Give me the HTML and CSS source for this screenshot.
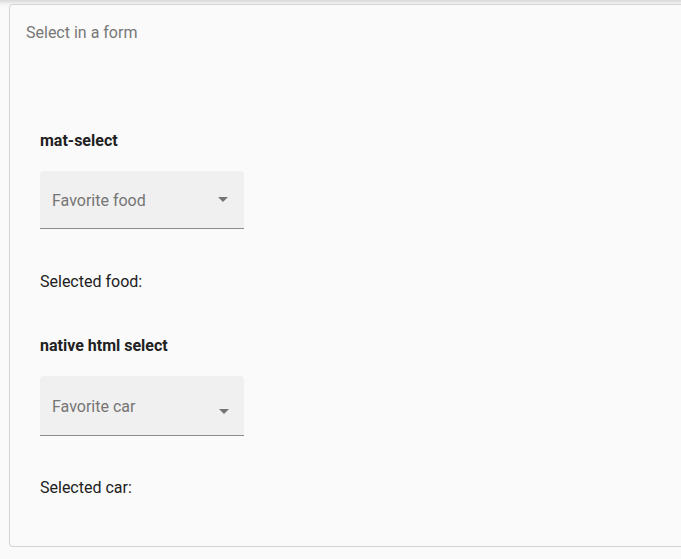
FILE: index.html
```html
<!DOCTYPE html>
<html>
<head>
<meta charset="utf-8">
<link rel="stylesheet" href="styles.css">
</head>
<body>
<div class="card">
  <div class="card-title">Select in a form</div>
  <form class="content">
    <h4 class="heading">mat-select</h4>
    <div class="field">
      <span class="placeholder">Favorite food</span>
      <span class="arrow"></span>
    </div>
    <p class="selected">Selected food:</p>
    <h4 class="heading">native html select</h4>
    <div class="field native">
      <span class="placeholder">Favorite car</span>
      <span class="arrow"></span>
    </div>
    <p class="selected">Selected car:</p>
  </form>
</div>
</body>
</html>
```
FILE: styles.css
```css
html, body {
  margin: 0;
  padding: 0;
}
body {
  background: linear-gradient(#d9d9d9 0px, #ececec 3px, #f6f6f6 5px, #fafafa 8px);
  font-family: Roboto, "Noto Sans", sans-serif;
  height: 559px;
  overflow: hidden;
  padding: 4px 0 0 9px;
  box-sizing: border-box;
}
.card {
  background: #fafafa;
  border: 1px solid #d4d4d4;
  border-right: none;
  border-radius: 4px 0 0 4px;
  height: 543px;
  box-sizing: border-box;
  padding: 18px 0 0 16px;
}
.card-title {
  font-size: 16px;
  color: #777;
  line-height: 20px;
}
.content {
  padding: 88px 0 0 14px;
}
.heading {
  margin: 0;
  font-size: 16px;
  font-weight: 700;
  color: #212121;
  line-height: 20px;
}
.field {
  width: 204px;
  height: 58px;
  margin-top: 20px;
  background: #f0f0f0;
  border-radius: 4px 4px 0 0;
  border-bottom: 1px solid #8c8c8c;
  box-sizing: border-box;
  display: flex;
  align-items: center;
  padding: 0 12px;
}
.placeholder {
  font-size: 16px;
  color: #757575;
  flex: 1;
  margin-top: 2px;
}
.arrow {
  width: 0;
  height: 0;
  border-left: 5px solid transparent;
  border-right: 5px solid transparent;
  border-top: 5px solid #757575;
  margin-right: 4px;
}
.native {
  height: 60px;
}
.native .placeholder {
  margin-top: 2px;
}
.native .arrow {
  margin-top: 12px;
  margin-right: 3px;
}
.selected {
  margin: 42px 0 0;
  font-size: 16px;
  color: #212121;
  line-height: 22px;
}
.native + .selected {
  margin-top: 41px;
}
.selected + .heading {
  margin-top: 43px;
}
```
